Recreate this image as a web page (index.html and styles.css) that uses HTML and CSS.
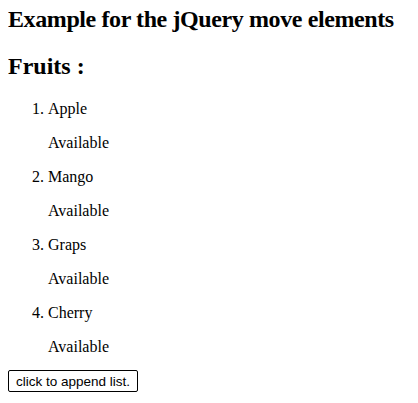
FILE: index.html
```html
<!DOCTYPE html>
<html>
<head>
<meta charset="utf-8">
<link rel="stylesheet" href="styles.css">
</head>
<body>
<h2 class="title">Example for the jQuery move elements</h2>
<h2 class="sub">Fruits :</h2>
<ol class="fruits">
<li>Apple<p>Available</p></li>
<li>Mango<p>Available</p></li>
<li>Graps<p>Available</p></li>
<li>Cherry<p>Available</p></li>
</ol>
<button class="btn">click to append list.</button>
</body>
</html>
```
FILE: styles.css
```css
body {
  font-family: "Liberation Serif", serif;
  margin: 0 8px 8px;
  padding-top: 6px;
}
.title {
  margin-top: 0;
  letter-spacing: -0.4px;
}
.btn {
  font-family: "Liberation Sans", sans-serif;
  font-size: 13.5px;
  color: #000;
  background: #fff;
  border: 1px solid #000;
  border-radius: 2px;
  padding: 1px 7px;
  height: 22px;
  margin-top: -2px;
}
```
